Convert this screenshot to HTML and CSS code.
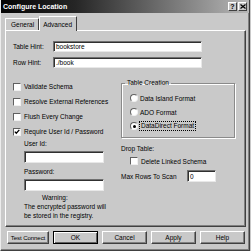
FILE: index.html
```html
<!DOCTYPE html>
<html lang="en">

<head>
  <meta charset="UTF-8">
  <title>Configure Location</title>
  <link rel="stylesheet" href="styles.css">
</head>

<body>
  <div class="window">
    <div class="titlebar">
      <span class="title">Configure Location</span>
      <div class="caption-btns">
        <span class="cap-btn">?</span>
        <span class="cap-btn">
          <svg width="6" height="5" viewBox="0 0 6 5"><path d="M0.5 0.5 L5.5 4.5 M5.5 0.5 L0.5 4.5" stroke="#000" stroke-width="1.2"/></svg>
        </span>
      </div>
    </div>

    <div class="content">
      <div class="tabs">
        <div class="tab">General</div>
        <div class="tab active">Advanced</div>
      </div>

      <div class="panel">
        <div class="hints">
          <div class="hint-row"><span class="hint-label">Table Hint:</span><div class="field wide">bookstore</div></div>
          <div class="hint-row"><span class="hint-label">Row Hint:</span><div class="field wide">./book</div></div>
        </div>

        <div class="columns">
          <div class="col-left">
            <div class="check"><span class="box"></span>Validate Schema</div>
            <div class="check"><span class="box"></span>Resolve External References</div>
            <div class="check"><span class="box"></span>Flush Every Change</div>
            <div class="check">
              <span class="box">
                <svg width="6" height="6" viewBox="0 0 6 6"><path d="M0.8 2.6 L2.3 4.2 L5.3 0.9" fill="none" stroke="#000" stroke-width="1.3"/></svg>
              </span>Require User Id / Password
            </div>

            <div class="login">
              <div class="sub-label">User Id:</div>
              <div class="field short"></div>
              <div class="sub-label pw">Password:</div>
              <div class="field short"></div>
              <div class="warning">
                <div class="warn-title">Warning:</div>
                The encrypted password will<br>be stored in the registry.
              </div>
            </div>
          </div>

          <div class="col-right">
            <fieldset class="group">
              <legend>Table Creation</legend>
              <div class="radio"><span class="dot"></span>Data Island Format</div>
              <div class="radio"><span class="dot"></span>ADO Format</div>
              <div class="radio"><span class="dot on"></span><span class="focus">DataDirect Format</span></div>
            </fieldset>
            <div class="drop-label">Drop Table:</div>
            <div class="check indent"><span class="box"></span>Delete Linked Schema</div>
            <div class="max-row"><span class="max-label">Max Rows To Scan</span><div class="field tiny">0</div></div>
          </div>
        </div>
      </div>

      <div class="buttons">
        <div class="btn test">Test Connect</div>
        <div class="btn default">OK</div>
        <div class="btn">Cancel</div>
        <div class="btn">Apply</div>
        <div class="btn">Help</div>
      </div>
    </div>
  </div>
</body>

</html>
```

FILE: styles.css
```css
/* General Styles */
* {
  box-sizing: border-box;
}

body {
  margin: 0;
  background-color: #c9c9c9;
  font-family: 'Liberation Sans', Arial, sans-serif;
  font-size: 6.5px;
  color: #000;
}

.window {
  width: 250px;
  height: 251px;
  background-color: #c9c9c9;
  border-left: 1px solid #ececec;
  border-right: 1px solid #404040;
  border-bottom: 1px solid #404040;
  box-shadow: inset -1px -1px 0 #808080;
}

/* Title bar */
.titlebar {
  height: 13px;
  display: flex;
  align-items: center;
  justify-content: space-between;
  padding: 0 2px 0 2px;
  background: linear-gradient(to right, #050505 0%, #262626 30%, #b8b8b8 100%);
}

.title {
  color: #fff;
  font-weight: bold;
  font-size: 7px;
}

.caption-btns {
  display: flex;
  gap: 1px;
}

.cap-btn {
  width: 9px;
  height: 9px;
  display: flex;
  align-items: center;
  justify-content: center;
  background-color: #c9c9c9;
  border-top: 1px solid #fff;
  border-left: 1px solid #fff;
  border-right: 1px solid #404040;
  border-bottom: 1px solid #404040;
  font-weight: bold;
  font-size: 7px;
  line-height: 7px;
}

.content {
  padding: 0 3px 0 4px;
}

/* Tabs */
.tabs {
  display: flex;
  align-items: flex-end;
  margin-top: 3px;
  height: 14px;
}

.tab {
  height: 12px;
  padding: 0 4px 0 5px;
  display: flex;
  align-items: center;
  border-top: 1px solid #fff;
  border-left: 1px solid #fff;
  border-right: 1px solid #404040;
  border-radius: 1px 1px 0 0;
}

.tab.active {
  height: 15px;
  margin-bottom: -1px;
  padding: 0 4px 0 3px;
  background-color: #c9c9c9;
  position: relative;
  z-index: 1;
}

/* Panel */
.panel {
  height: 197px;
  padding: 10px 0 0 7px;
  border-top: 1px solid #fff;
  border-left: 1px solid #fff;
  border-right: 1px solid #404040;
  border-bottom: 1px solid #404040;
  box-shadow: inset -1px -1px 0 #808080;
}

.hints {
  display: flex;
  flex-direction: column;
  gap: 5px;
}

.hint-row {
  display: flex;
  align-items: center;
  height: 11px;
}

.hint-label {
  width: 40px;
}

.field {
  height: 11px;
  padding-left: 2px;
  display: flex;
  align-items: center;
  background-color: #fff;
  border-top: 1px solid #707070;
  border-left: 1px solid #707070;
  border-right: 1px solid #e8e8e8;
  border-bottom: 1px solid #e8e8e8;
  box-shadow: inset 1px 1px 0 #303030;
}

.field.wide {
  width: 149px;
}

.field.short {
  width: 80px;
  height: 12px;
  margin-top: 2px;
}

.field.tiny {
  width: 29px;
  height: 12px;
}

.columns {
  display: grid;
  grid-template-columns: 108px 114px;
  margin-top: 11px;
}

/* Checkboxes and radios */
.check {
  display: flex;
  align-items: center;
  gap: 3px;
  height: 15px;
}

.check.indent {
  height: 14px;
  padding-left: 9px;
}

.box {
  width: 8px;
  height: 8px;
  display: flex;
  align-items: center;
  justify-content: center;
  background-color: #fff;
  border-top: 1px solid #606060;
  border-left: 1px solid #606060;
  border-right: 1px solid #f0f0f0;
  border-bottom: 1px solid #f0f0f0;
}

.login {
  padding-left: 11px;
}

.sub-label {
  line-height: 10px;
}

.sub-label.pw {
  margin-top: 4px;
}

.warning {
  margin-top: 2px;
  line-height: 9px;
}

.warn-title {
  padding-left: 18px;
}

/* Table Creation group */
.group {
  margin: 0;
  width: 114px;
  padding: 4px 0 4px 8px;
  border: 1px solid #8a8a8a;
  box-shadow: inset 1px 1px 0 #fff, 1px 1px 0 #fff;
}

.group legend {
  margin-left: -5px;
  padding: 0 2px;
  line-height: 8px;
}

.radio {
  display: flex;
  align-items: center;
  gap: 2px;
  height: 14px;
}

.dot {
  width: 8px;
  height: 8px;
  border-radius: 50%;
  display: flex;
  align-items: center;
  justify-content: center;
  background-color: #fff;
  border-top: 1px solid #606060;
  border-left: 1px solid #606060;
  border-right: 1px solid #f0f0f0;
  border-bottom: 1px solid #f0f0f0;
}

.dot.on::after {
  content: '';
  width: 3px;
  height: 3px;
  border-radius: 50%;
  background-color: #000;
}

.focus {
  outline: 1px dotted #000;
  padding: 0 1px;
  line-height: 8px;
}

.drop-label {
  margin-top: 6px;
  line-height: 10px;
}

.max-row {
  display: flex;
  align-items: center;
  margin-top: 2px;
}

.max-label {
  width: 66px;
}

/* Buttons */
.buttons {
  display: flex;
  gap: 4px;
  margin-top: 4px;
  padding-left: 2px;
}

.btn {
  width: 45px;
  height: 13px;
  display: flex;
  align-items: center;
  justify-content: center;
  white-space: nowrap;
  border-top: 1px solid #fff;
  border-left: 1px solid #fff;
  border-right: 1px solid #404040;
  border-bottom: 1px solid #404040;
  box-shadow: inset -1px -1px 0 #808080;
}

.btn.test {
  width: 42px;
  font-size: 6.1px;
  letter-spacing: -0.1px;
}

.btn.default {
  border: 1px solid #000;
  box-shadow: inset 1px 1px 0 #fff, inset -1px -1px 0 #606060;
}
```
